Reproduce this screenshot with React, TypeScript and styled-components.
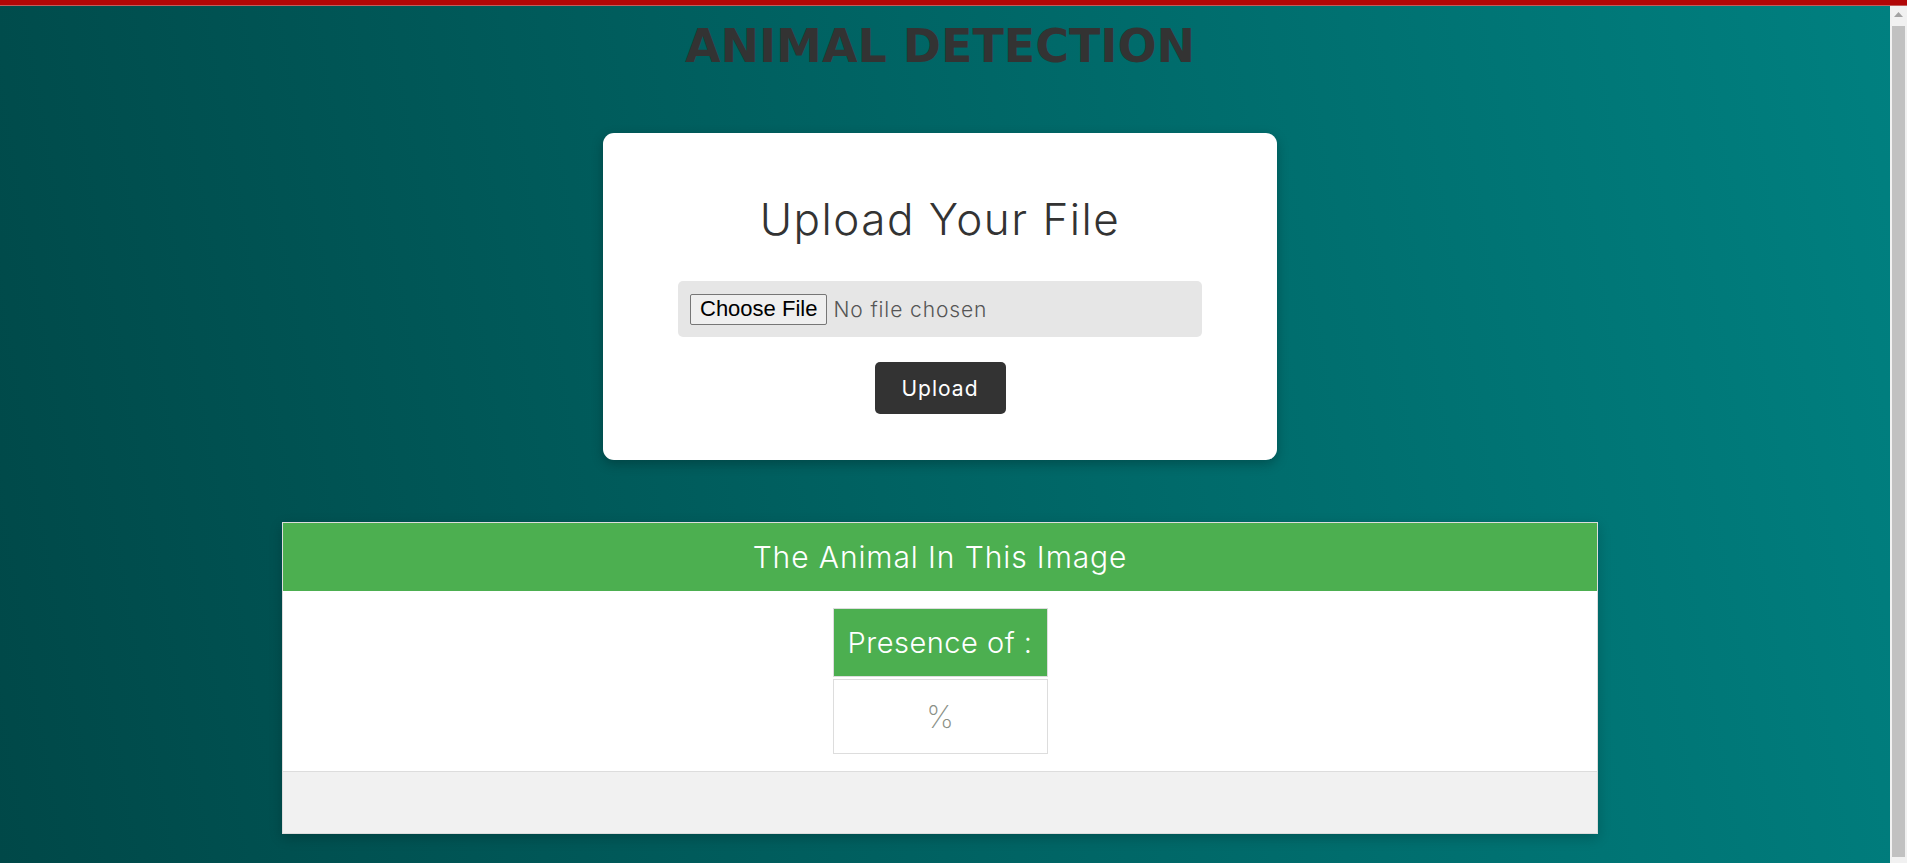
import React from "react";
import styled, { createGlobalStyle } from "styled-components";

const GlobalStyle = createGlobalStyle`
  *, *::before, *::after { box-sizing: border-box; }
  html, body { margin: 0; padding: 0; height: 100%; overflow: hidden; }
  body { font-family: "Inter", "Liberation Sans", sans-serif; }
  #root { height: 100%; }
`;

const Frame = styled.div`
  display: flex;
  flex-direction: column;
  height: 100vh;
`;

const TopBar = styled.div`
  flex: 0 0 auto;
  height: 6px;
  background: #b10707;
  border-bottom: 1px solid #c25c5a;
`;

const Viewport = styled.div`
  flex: 1 1 auto;
  min-height: 0;
  display: flex;
`;

const ScrollArea = styled.div`
  flex: 1 1 auto;
  overflow: hidden;
  background: linear-gradient(80deg, #004848 0%, #008080 100%);
`;

const ScrollTrack = styled.div`
  flex: 0 0 17px;
  background: #f1f1f1;
  display: flex;
  flex-direction: column;
  align-items: center;
`;

const ScrollArrow = styled.div`
  height: 17px;
  width: 17px;
  display: flex;
  align-items: center;
  justify-content: center;
`;

const ScrollThumb = styled.div`
  margin-top: 3px;
  width: 13px;
  height: 831px;
  background: #c1c1c1;
`;

const Page = styled.main`
  display: flex;
  flex-direction: column;
  align-items: center;
  padding: 0 10px 40px 0;
`;

const Title = styled.h1`
  margin: 13px 0 0;
  font-family: "DejaVu Sans", Verdana, sans-serif;
  font-weight: 700;
  font-size: 46px;
  line-height: 55px;
  color: #333333;
`;

const Card = styled.section`
  margin-top: 59px;
  width: 674px;
  padding: 60px 75px 46px;
  background: #ffffff;
  border-radius: 11px;
  box-shadow: 0 4px 12px rgba(0, 0, 0, 0.25);
  display: flex;
  flex-direction: column;
  align-items: center;
`;

const CardTitle = styled.h2`
  margin: 0;
  font-family: "Inter", sans-serif;
  font-weight: 300;
  font-size: 44px;
  line-height: 53px;
  letter-spacing: 1.5px;
  color: #333333;
`;

const FileBox = styled.label`
  margin-top: 35px;
  width: 524px;
  height: 56px;
  padding: 0 12px;
  background: #e6e6e6;
  border-radius: 5px;
  display: flex;
  align-items: center;
  gap: 6px;
  cursor: pointer;
`;

const HiddenInput = styled.input`
  display: none;
`;

const ChooseButton = styled.span`
  height: 31px;
  padding: 0 9px;
  display: inline-flex;
  align-items: center;
  font-family: "Liberation Sans", Arial, sans-serif;
  font-size: 22px;
  color: #000000;
  background: #efefef;
  border: 1px solid #767676;
  border-radius: 2px;
`;

const FileName = styled.span`
  font-family: "Inter", sans-serif;
  font-weight: 300;
  font-size: 21px;
  letter-spacing: 0.9px;
  color: #555555;
`;

const UploadButton = styled.button`
  margin-top: 25px;
  width: 131px;
  height: 52px;
  border: none;
  border-radius: 5px;
  background: #333333;
  color: #ffffff;
  font-family: "Inter", sans-serif;
  font-weight: 400;
  font-size: 21px;
  letter-spacing: 1px;
  cursor: pointer;
`;

const Results = styled.section`
  margin-top: 62px;
  width: 70%;
  border: 1px solid #dddddd;
  background: #ffffff;
  box-shadow: 0 4px 12px rgba(0, 0, 0, 0.2);
`;

const ResultsHeader = styled.header`
  height: 68px;
  background: #4caf50;
  display: flex;
  align-items: center;
  justify-content: center;
  font-family: "Inter", sans-serif;
  font-weight: 300;
  font-size: 30px;
  letter-spacing: 0.9px;
  color: #ffffff;
`;

const ResultsBody = styled.div`
  padding: 17px 0 17px;
  display: flex;
  justify-content: center;
`;

const Tally = styled.div`
  width: 215px;
  display: flex;
  flex-direction: column;
  gap: 2px;
`;

const Cell = styled.div<{ $head?: boolean }>`
  height: ${(p) => (p.$head ? "69px" : "75px")};
  border: 1px solid #dddddd;
  background: ${(p) => (p.$head ? "#4caf50" : "#ffffff")};
  color: ${(p) => (p.$head ? "#ffffff" : "#8a8f86")};
  font-family: "Inter", sans-serif;
  font-weight: ${(p) => (p.$head ? 300 : 200)};
  font-size: ${(p) => (p.$head ? "29px" : "31px")};
  letter-spacing: ${(p) => (p.$head ? "0.5px" : "0")};
  display: flex;
  align-items: center;
  justify-content: center;
  white-space: nowrap;
`;

const ResultsFooter = styled.footer`
  height: 62px;
  background: #f1f1f1;
  border-top: 1px solid #dddddd;
`;

export default function App() {
  return (
    <>
      <GlobalStyle />
      <Frame>
        <TopBar />
        <Viewport>
          <ScrollArea>
            <Page>
              <Title>ANIMAL DETECTION</Title>
              <Card>
                <CardTitle>Upload Your File</CardTitle>
                <FileBox>
                  <HiddenInput type="file" />
                  <ChooseButton>Choose File</ChooseButton>
                  <FileName>No file chosen</FileName>
                </FileBox>
                <UploadButton type="button">Upload</UploadButton>
              </Card>
              <Results>
                <ResultsHeader>The Animal In This Image</ResultsHeader>
                <ResultsBody>
                  <Tally>
                    <Cell $head>Presence of :</Cell>
                    <Cell>%</Cell>
                  </Tally>
                </ResultsBody>
                <ResultsFooter />
              </Results>
            </Page>
          </ScrollArea>
          <ScrollTrack aria-hidden="true">
            <ScrollArrow>
              <svg width="9" height="5" viewBox="0 0 9 5">
                <path d="M0 5 L4.5 0 L9 5 Z" fill="#a3a3a3" />
              </svg>
            </ScrollArrow>
            <ScrollThumb />
          </ScrollTrack>
        </Viewport>
      </Frame>
    </>
  );
}
